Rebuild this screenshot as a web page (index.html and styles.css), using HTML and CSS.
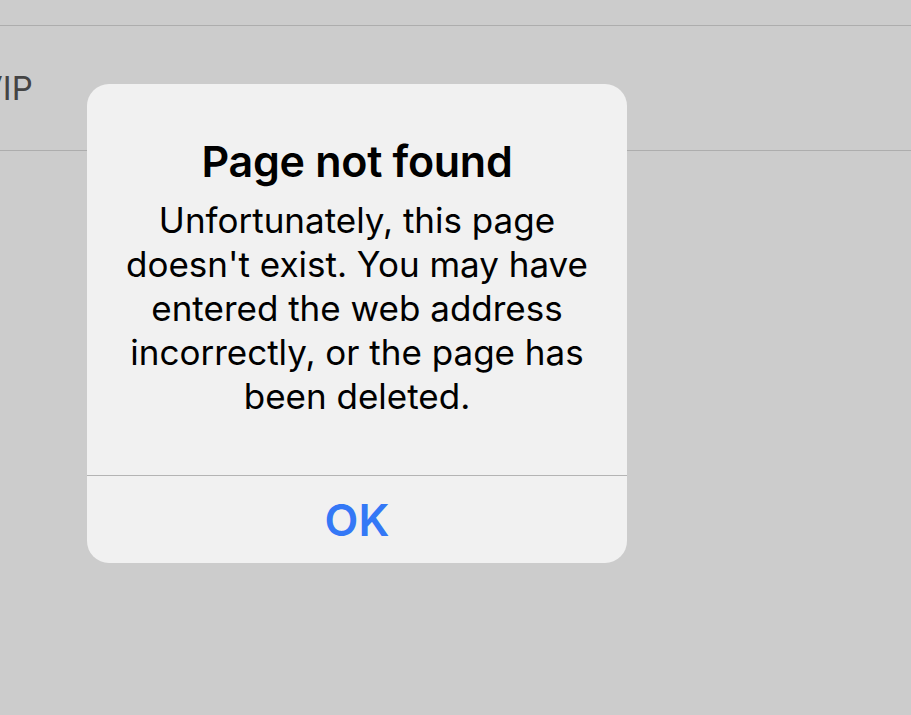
FILE: index.html
```html
<!DOCTYPE html>
<html lang="en">
<head>
    <meta charset="UTF-8">
    <meta name="viewport" content="width=device-width, initial-scale=1.0">
    <title>Page not found</title>
    <link rel="stylesheet" href="styles.css">
</head>
<body>
    <div class="screen">
        <div class="top-gap"></div>
        <div class="row">
            <span class="row-label">VIP</span>
        </div>

        <div class="alert">
            <div class="alert-body">
                <h1 class="alert-title">Page not found</h1>
                <p class="alert-text">Unfortunately, this page doesn't exist. You may have entered the web address incorrectly, or the page has been deleted.</p>
            </div>
            <button class="alert-btn">OK</button>
        </div>
    </div>
</body>
</html>
```

FILE: styles.css
```css
html, body {
    margin: 0;
    padding: 0;
    background: #cccccc;
}
body {
    font-family: Inter, "Noto Sans", sans-serif;
    width: 911px;
    height: 715px;
    overflow: hidden;
}
.screen {
    position: relative;
    height: 715px;
}
.top-gap {
    height: 25px;
}
.row {
    height: 124px;
    border-top: 1px solid #adadad;
    border-bottom: 1px solid #adadad;
    display: flex;
    align-items: center;
}
.row-label {
    font-size: 33px;
    color: #444;
    margin-left: -20px;
}
.alert {
    position: absolute;
    left: 87px;
    top: 84px;
    width: 540px;
    background: #f1f1f1;
    border-radius: 22px;
    overflow: hidden;
}
.alert-body {
    height: 391px;
    box-sizing: border-box;
    padding: 52px 30px 0;
    text-align: center;
}
.alert-title {
    margin: 0;
    font-size: 43px;
    font-weight: 600;
    line-height: 50px;
    color: #000;
    letter-spacing: -0.3px;
}
.alert-text {
    margin: 12px 0 0;
    font-size: 35px;
    line-height: 44px;
    color: #000;
}
.alert-btn {
    display: block;
    width: 100%;
    height: 88px;
    border: none;
    border-top: 1px solid #b4b4b4;
    background: transparent;
    font-family: inherit;
    font-size: 44px;
    font-weight: 600;
    color: #3478f6;
    padding: 0;
}
```
